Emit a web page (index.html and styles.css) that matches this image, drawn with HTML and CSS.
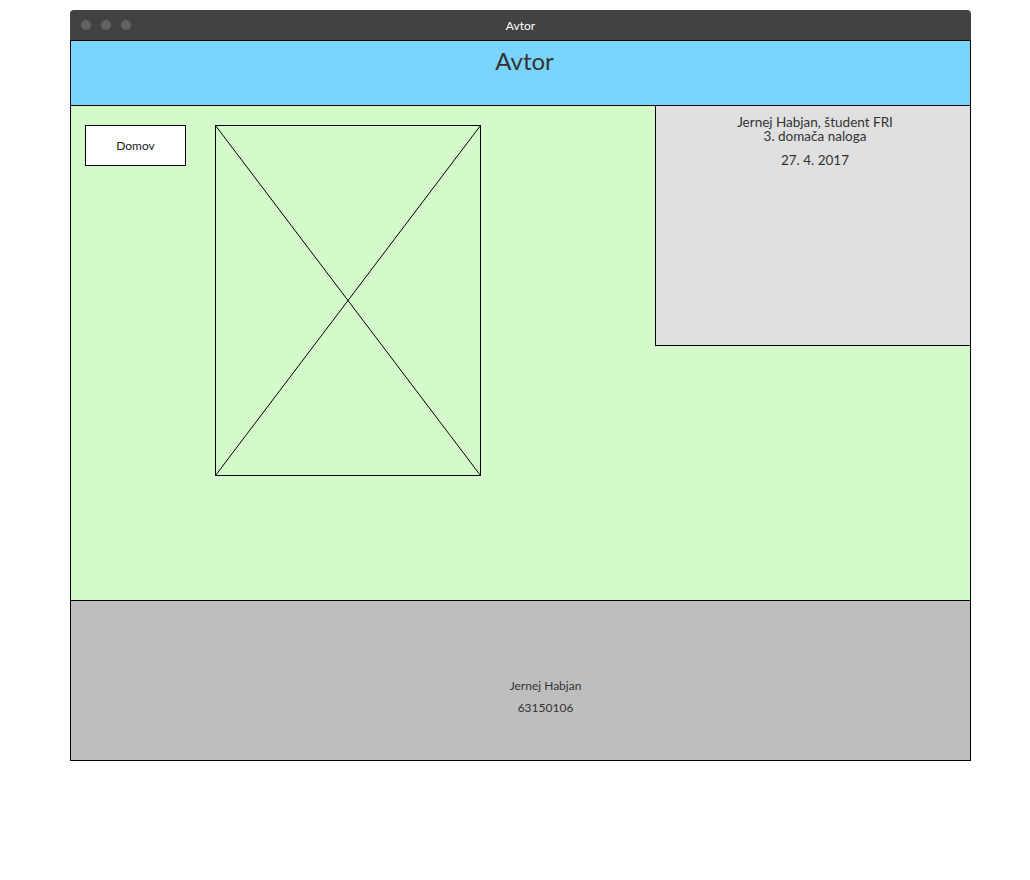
FILE: index.html
```html
<!DOCTYPE html>
<html lang="sl">
<head>
<meta charset="utf-8">
<title>Avtor</title>
<link rel="stylesheet" href="styles.css">
</head>
<body>
<div class="window">
  <div class="titlebar">
    <div class="dots"><span class="dot"></span><span class="dot"></span><span class="dot"></span></div>
    <div class="wtitle">Avtor</div>
  </div>
  <div class="content">
    <header class="header"><h1>Avtor</h1></header>
    <main class="main">
      <nav class="nav"><a class="btn">Domov</a></nav>
      <div class="picture">
        <svg width="266" height="351" viewBox="0 0 266 351">
          <rect x="0.5" y="0.5" width="265" height="350" fill="none" stroke="#000" stroke-width="1"/>
          <line x1="0.5" y1="0.5" x2="265.5" y2="350.5" stroke="#000" stroke-width="1"/>
          <line x1="265.5" y1="0.5" x2="0.5" y2="350.5" stroke="#000" stroke-width="1"/>
        </svg>
      </div>
      <aside class="aside">
        <p class="line">Jernej Habjan, študent FRI</p>
        <p class="line">3. domača naloga</p>
        <p class="line date">27. 4. 2017</p>
      </aside>
    </main>
    <footer class="footer">
      <p>Jernej Habjan</p>
      <p>63150106</p>
    </footer>
  </div>
</div>
</body>
</html>
```
FILE: styles.css
```css
* { box-sizing: border-box; }
body {
  margin: 0;
  background: #fff;
  font-family: Lato, "Noto Sans", sans-serif;
  color: #333;
}
.window {
  margin: 10px 0 0 70px;
  width: 901px;
}
.titlebar {
  position: relative;
  height: 30px;
  background: #424242;
  border-radius: 4px 4px 0 0;
  display: flex;
  align-items: center;
  justify-content: center;
}
.dots {
  position: absolute;
  left: 11px;
  top: 10px;
  display: flex;
  gap: 10px;
}
.dot {
  width: 10px;
  height: 10px;
  border-radius: 50%;
  background: #636363;
}
.wtitle {
  color: #fff;
  font-size: 12px;
  padding-top: 1px;
}
.content {
  border-left: 1px solid #000;
  border-right: 1px solid #000;
  border-bottom: 1px solid #000;
}
.header {
  height: 66px;
  background: #79d4ff;
  border-top: 1px solid #000;
  border-bottom: 1px solid #000;
  display: flex;
  justify-content: center;
}
.header h1 {
  margin: 5px 0 0 8px;
  font-size: 24px;
  font-weight: normal;
  line-height: 30px;
  color: #333;
}
.main {
  height: 494px;
  background: #d4facc;
  display: flex;
  align-items: flex-start;
}
.nav {
  margin: 19px 0 0 14px;
}
.btn {
  display: flex;
  align-items: center;
  justify-content: center;
  width: 101px;
  height: 41px;
  background: #fff;
  border: 1px solid #000;
  font-size: 12px;
  color: #222;
}
.picture {
  margin: 19px 0 0 29px;
  line-height: 0;
}
.aside {
  margin-left: auto;
  width: 315px;
  height: 240px;
  background: #e0e0e0;
  border-left: 1px solid #000;
  border-bottom: 1px solid #000;
  text-align: center;
  font-size: 13.5px;
  padding-top: 9px;
  padding-left: 4px;
}
.aside .line { margin: 0; line-height: 14px; }
.aside .date { margin-top: 10px; }
.footer {
  height: 160px;
  background: #bebebe;
  border-top: 1px solid #000;
  padding: 78px 0 0 50px;
  text-align: center;
  font-size: 12px;
  color: #333;
}
.footer p { margin: 0 0 8px; line-height: 14px; }
```
